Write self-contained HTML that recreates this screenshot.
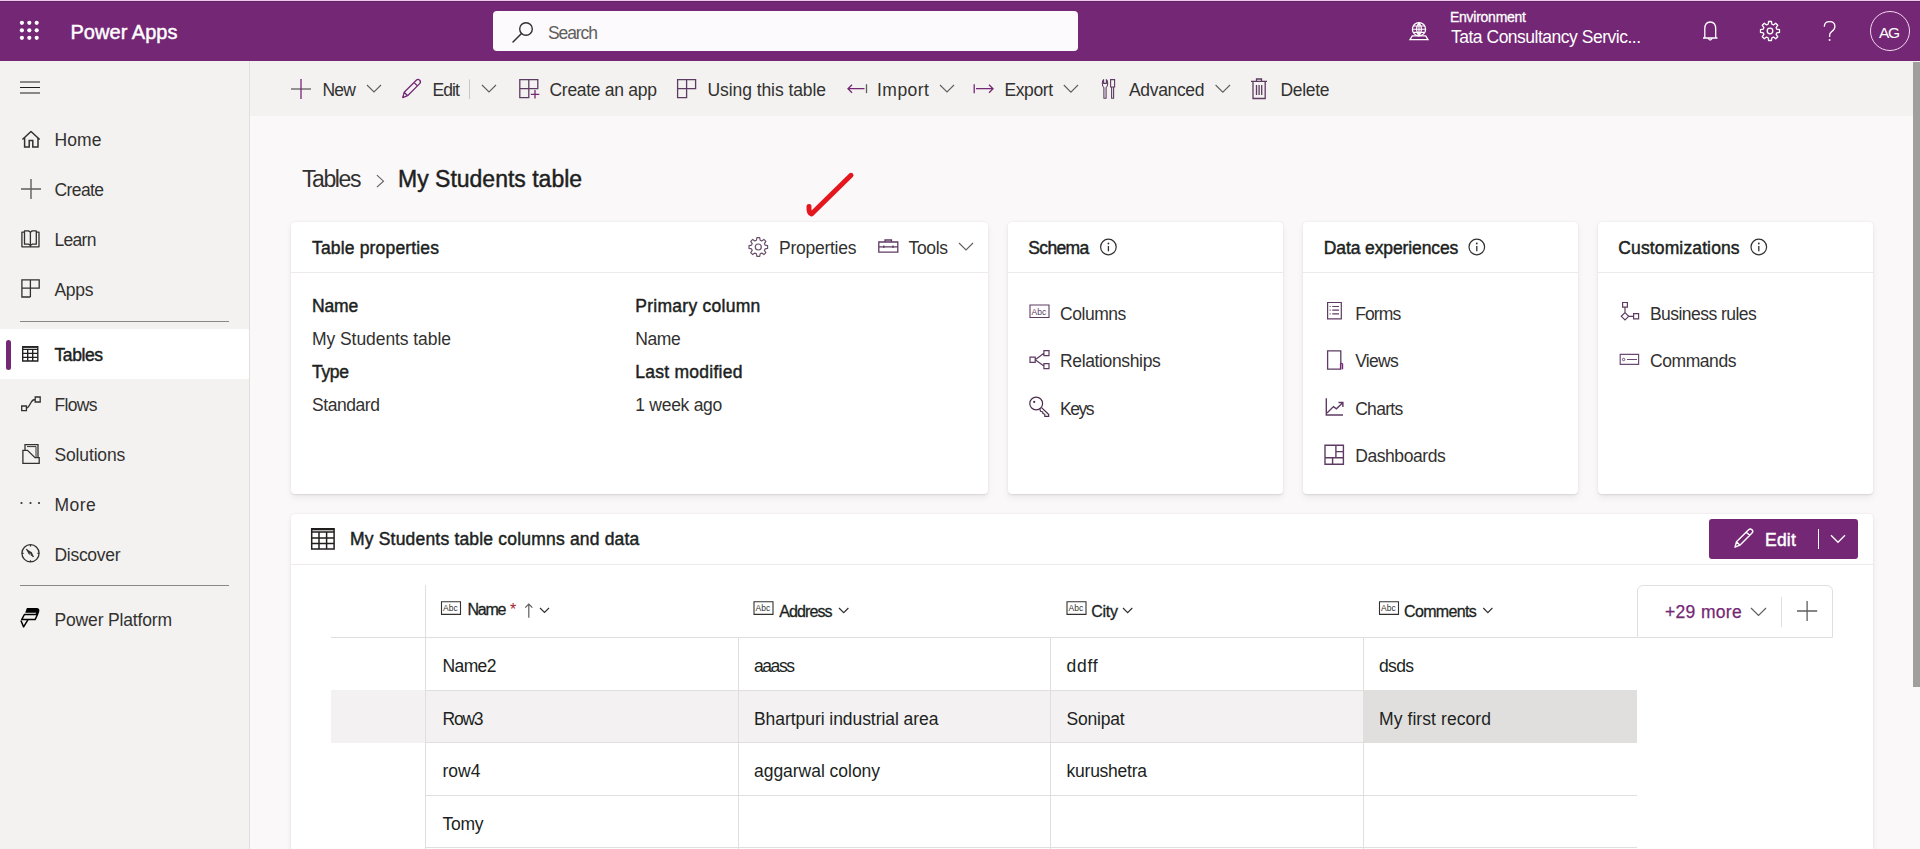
<!DOCTYPE html>
<html><head><meta charset="utf-8"><title>Power Apps</title>
<style>
html,body{margin:0;padding:0;}
body{width:1920px;height:849px;overflow:hidden;position:relative;background:#fbf8f9;font-family:"Liberation Sans",sans-serif;}
.t{position:absolute;white-space:nowrap;line-height:1;}
.b{position:absolute;box-sizing:border-box;}
svg.b{overflow:visible;}
</style></head><body>
<div class="b" style="left:0px;top:0px;width:1920px;height:61px;background:#742774;"></div>
<div class="b" style="left:0px;top:0px;width:1920px;height:1px;background:#f0c8ee;"></div>
<div class="b" style="left:0px;top:1px;width:1920px;height:1px;background:#5e2460;"></div>
<div class="b" style="left:0px;top:61px;width:249px;height:788px;background:#f3f2f1;"></div>
<div class="b" style="left:249px;top:61px;width:1px;height:788px;background:#e1dfdd;"></div>
<div class="b" style="left:250px;top:61px;width:1670px;height:55px;background:#f3f2f1;"></div>
<div class="b" style="left:1913px;top:62px;width:7px;height:625px;background:#a19f9d;border-radius:0;"></div>
<div class="t" style="left:70.50px;top:22px;font-size:20px;color:#ffffff;-webkit-text-stroke:0.45px #ffffff;letter-spacing:0.033px;">Power Apps</div>
<div class="b" style="left:493px;top:11px;width:585px;height:40px;background:#fcfafc;border-radius:4px;"></div>
<div class="t" style="left:548.00px;top:25px;font-size:17.5px;color:#605e5c;letter-spacing:-1.095px;">Search</div>
<div class="t" style="left:1450.00px;top:10px;font-size:14px;color:#ffffff;-webkit-text-stroke:0.45px #ffffff;letter-spacing:-0.261px;-webkit-text-stroke-width:0.3px;">Environment</div>
<div class="t" style="left:1451.00px;top:29px;font-size:17.5px;color:#ffffff;letter-spacing:-0.492px;">Tata Consultancy Servic...</div>
<div class="b" style="left:1870px;top:11px;width:40px;height:40px;border:1.3px solid #f3d6f0;border-radius:50%;"></div>
<div class="t" style="left:1879.00px;top:25px;font-size:15.5px;color:#ffffff;letter-spacing:-1.398px;">AG</div>
<div class="b" style="left:20px;top:321px;width:209px;height:1px;background:#8a8886;"></div>
<div class="b" style="left:20px;top:585px;width:209px;height:1px;background:#8a8886;"></div>
<div class="b" style="left:0px;top:329px;width:249px;height:50px;background:#ffffff;"></div>
<div class="b" style="left:6px;top:340px;width:5px;height:30px;background:#742774;border-radius:3px;"></div>
<div class="t" style="left:54.50px;top:132px;font-size:17.5px;color:#323130;letter-spacing:0.092px;">Home</div>
<div class="t" style="left:54.50px;top:182px;font-size:17.5px;color:#323130;letter-spacing:-0.600px;">Create</div>
<div class="t" style="left:54.50px;top:232px;font-size:17.5px;color:#323130;letter-spacing:-0.700px;">Learn</div>
<div class="t" style="left:54.50px;top:282px;font-size:17.5px;color:#323130;letter-spacing:-0.300px;">Apps</div>
<div class="t" style="left:54.50px;top:347px;font-size:17.5px;color:#201f1e;-webkit-text-stroke:0.45px #201f1e;letter-spacing:-0.415px;">Tables</div>
<div class="t" style="left:54.50px;top:397px;font-size:17.5px;color:#323130;letter-spacing:-0.669px;">Flows</div>
<div class="t" style="left:54.50px;top:447px;font-size:17.5px;color:#323130;letter-spacing:-0.152px;">Solutions</div>
<div class="t" style="left:54.50px;top:497px;font-size:17.5px;color:#323130;letter-spacing:0.433px;">More</div>
<div class="t" style="left:54.50px;top:547px;font-size:17.5px;color:#323130;letter-spacing:-0.296px;">Discover</div>
<div class="t" style="left:54.50px;top:612px;font-size:17.5px;color:#323130;letter-spacing:-0.162px;">Power Platform</div>
<div class="t" style="left:322.50px;top:82px;font-size:17.5px;color:#323130;letter-spacing:-0.794px;">New</div>
<div class="t" style="left:432.50px;top:82px;font-size:17.5px;color:#323130;letter-spacing:-0.896px;">Edit</div>
<div class="t" style="left:549.50px;top:82px;font-size:17.5px;color:#323130;letter-spacing:-0.288px;">Create an app</div>
<div class="t" style="left:707.50px;top:82px;font-size:17.5px;color:#323130;letter-spacing:-0.074px;">Using this table</div>
<div class="t" style="left:877.00px;top:82px;font-size:17.5px;color:#323130;letter-spacing:0.478px;">Import</div>
<div class="t" style="left:1004.50px;top:82px;font-size:17.5px;color:#323130;letter-spacing:-0.415px;">Export</div>
<div class="t" style="left:1129.00px;top:82px;font-size:17.5px;color:#323130;letter-spacing:-0.339px;">Advanced</div>
<div class="t" style="left:1280.50px;top:82px;font-size:17.5px;color:#323130;letter-spacing:-0.315px;">Delete</div>
<div class="t" style="left:302.00px;top:168px;font-size:23px;color:#323130;letter-spacing:-1.414px;">Tables</div>
<div class="t" style="left:398.00px;top:168px;font-size:23px;color:#201f1e;-webkit-text-stroke:0.45px #201f1e;">My Students table</div>
<div class="b" style="left:291px;top:222px;width:697px;height:272px;background:#ffffff;border-radius:4px;box-shadow:0 0.6px 1.8px rgba(0,0,0,0.10),0 3.2px 7.2px rgba(0,0,0,0.06);"></div>
<div class="b" style="left:291px;top:272px;width:697px;height:1px;background:#edebe9;"></div>
<div class="b" style="left:1008px;top:222px;width:275px;height:272px;background:#ffffff;border-radius:4px;box-shadow:0 0.6px 1.8px rgba(0,0,0,0.10),0 3.2px 7.2px rgba(0,0,0,0.06);"></div>
<div class="b" style="left:1008px;top:272px;width:275px;height:1px;background:#edebe9;"></div>
<div class="b" style="left:1303px;top:222px;width:275px;height:272px;background:#ffffff;border-radius:4px;box-shadow:0 0.6px 1.8px rgba(0,0,0,0.10),0 3.2px 7.2px rgba(0,0,0,0.06);"></div>
<div class="b" style="left:1303px;top:272px;width:275px;height:1px;background:#edebe9;"></div>
<div class="b" style="left:1598px;top:222px;width:275px;height:272px;background:#ffffff;border-radius:4px;box-shadow:0 0.6px 1.8px rgba(0,0,0,0.10),0 3.2px 7.2px rgba(0,0,0,0.06);"></div>
<div class="b" style="left:1598px;top:272px;width:275px;height:1px;background:#edebe9;"></div>
<div class="b" style="left:291px;top:514px;width:1582px;height:400px;background:#ffffff;border-radius:4px;box-shadow:0 0.6px 1.8px rgba(0,0,0,0.10),0 3.2px 7.2px rgba(0,0,0,0.06);"></div>
<div class="b" style="left:291px;top:564px;width:1582px;height:1px;background:#edebe9;"></div>
<div class="t" style="left:312.00px;top:240px;font-size:17.5px;color:#201f1e;-webkit-text-stroke:0.45px #201f1e;letter-spacing:0.166px;">Table properties</div>
<div class="t" style="left:779.00px;top:240px;font-size:17.5px;color:#323130;letter-spacing:-0.256px;">Properties</div>
<div class="t" style="left:908.50px;top:240px;font-size:17.5px;color:#323130;letter-spacing:-0.341px;">Tools</div>
<div class="t" style="left:312.00px;top:298px;font-size:17.5px;color:#201f1e;-webkit-text-stroke:0.45px #201f1e;letter-spacing:-0.142px;">Name</div>
<div class="t" style="left:312.00px;top:331px;font-size:17.5px;color:#323130;letter-spacing:-0.068px;">My Students table</div>
<div class="t" style="left:312.00px;top:364px;font-size:17.5px;color:#201f1e;-webkit-text-stroke:0.45px #201f1e;letter-spacing:-0.325px;">Type</div>
<div class="t" style="left:312.00px;top:397px;font-size:17.5px;color:#323130;letter-spacing:-0.436px;">Standard</div>
<div class="t" style="left:635.30px;top:298px;font-size:17.5px;color:#201f1e;-webkit-text-stroke:0.45px #201f1e;letter-spacing:0.266px;">Primary column</div>
<div class="t" style="left:635.30px;top:331px;font-size:17.5px;color:#323130;letter-spacing:-0.442px;">Name</div>
<div class="t" style="left:635.30px;top:364px;font-size:17.5px;color:#201f1e;-webkit-text-stroke:0.45px #201f1e;letter-spacing:0.256px;">Last modified</div>
<div class="t" style="left:635.30px;top:397px;font-size:17.5px;color:#323130;letter-spacing:-0.279px;">1 week ago</div>
<div class="t" style="left:1028.30px;top:240px;font-size:17.5px;color:#201f1e;-webkit-text-stroke:0.45px #201f1e;letter-spacing:-0.645px;">Schema</div>
<div class="t" style="left:1060.00px;top:306px;font-size:17.5px;color:#323130;letter-spacing:-0.456px;">Columns</div>
<div class="t" style="left:1060.00px;top:353px;font-size:17.5px;color:#323130;letter-spacing:-0.357px;">Relationships</div>
<div class="t" style="left:1060.00px;top:401px;font-size:17.5px;color:#323130;letter-spacing:-1.479px;">Keys</div>
<div class="t" style="left:1323.80px;top:240px;font-size:17.5px;color:#201f1e;-webkit-text-stroke:0.45px #201f1e;letter-spacing:-0.110px;">Data experiences</div>
<div class="t" style="left:1355.20px;top:306px;font-size:17.5px;color:#323130;letter-spacing:-0.903px;">Forms</div>
<div class="t" style="left:1355.20px;top:353px;font-size:17.5px;color:#323130;letter-spacing:-0.719px;">Views</div>
<div class="t" style="left:1355.20px;top:401px;font-size:17.5px;color:#323130;letter-spacing:-0.708px;">Charts</div>
<div class="t" style="left:1355.20px;top:448px;font-size:17.5px;color:#323130;letter-spacing:-0.425px;">Dashboards</div>
<div class="t" style="left:1618.30px;top:240px;font-size:17.5px;color:#201f1e;-webkit-text-stroke:0.45px #201f1e;letter-spacing:0.130px;">Customizations</div>
<div class="t" style="left:1650.00px;top:306px;font-size:17.5px;color:#323130;letter-spacing:-0.549px;">Business rules</div>
<div class="t" style="left:1650.00px;top:353px;font-size:17.5px;color:#323130;letter-spacing:-0.430px;">Commands</div>
<div class="t" style="left:350.00px;top:531px;font-size:17.5px;color:#201f1e;-webkit-text-stroke:0.45px #201f1e;letter-spacing:0.189px;">My Students table columns and data</div>
<div class="b" style="left:1709px;top:519px;width:149px;height:40px;background:#742774;border-radius:3px;"></div>
<div class="t" style="left:1765.00px;top:532px;font-size:17.5px;color:#ffffff;-webkit-text-stroke:0.45px #ffffff;letter-spacing:0.204px;">Edit</div>
<div class="b" style="left:1818px;top:529px;width:1px;height:20px;background:#ffffff;"></div>
<div class="b" style="left:331px;top:690px;width:1306px;height:53px;background:#f3f1f1;"></div>
<div class="b" style="left:425px;top:585px;width:1px;height:264px;background:#e1dfdd;"></div>
<div class="b" style="left:331px;top:637px;width:1306px;height:1px;background:#e1dfdd;"></div>
<div class="b" style="left:426px;top:690px;width:1211px;height:1px;background:#e1dfdd;"></div>
<div class="b" style="left:426px;top:742px;width:1211px;height:1px;background:#e1dfdd;"></div>
<div class="b" style="left:426px;top:795px;width:1211px;height:1px;background:#e1dfdd;"></div>
<div class="b" style="left:426px;top:847px;width:1211px;height:1px;background:#e1dfdd;"></div>
<div class="b" style="left:738px;top:637px;width:1px;height:212px;background:#e1dfdd;"></div>
<div class="b" style="left:1050px;top:637px;width:1px;height:212px;background:#e1dfdd;"></div>
<div class="b" style="left:1363px;top:637px;width:1px;height:212px;background:#e1dfdd;"></div>
<div class="b" style="left:1363px;top:690px;width:274px;height:53px;background:#e1dfdd;"></div>
<div class="t" style="left:467.50px;top:602px;font-size:16px;color:#201f1e;-webkit-text-stroke:0.45px #201f1e;letter-spacing:-1.273px;-webkit-text-stroke-width:0.3px;">Name</div>
<div class="t" style="left:510.00px;top:602px;font-size:16px;color:#a4262c;">*</div>
<div class="t" style="left:779.20px;top:604px;font-size:16px;color:#201f1e;-webkit-text-stroke:0.45px #201f1e;letter-spacing:-0.887px;-webkit-text-stroke-width:0.3px;">Address</div>
<div class="t" style="left:1091.20px;top:604px;font-size:16px;color:#201f1e;-webkit-text-stroke:0.45px #201f1e;letter-spacing:-0.240px;-webkit-text-stroke-width:0.3px;">City</div>
<div class="t" style="left:1404.00px;top:604px;font-size:16px;color:#201f1e;-webkit-text-stroke:0.45px #201f1e;letter-spacing:-0.651px;-webkit-text-stroke-width:0.3px;">Comments</div>
<div class="t" style="left:442.50px;top:658px;font-size:17.5px;color:#201f1e;letter-spacing:-0.609px;">Name2</div>
<div class="t" style="left:754.00px;top:658px;font-size:17.5px;color:#201f1e;letter-spacing:-1.431px;">aaass</div>
<div class="t" style="left:1066.60px;top:658px;font-size:17.5px;color:#201f1e;letter-spacing:0.708px;">ddff</div>
<div class="t" style="left:1379.00px;top:658px;font-size:17.5px;color:#201f1e;letter-spacing:-0.642px;">dsds</div>
<div class="t" style="left:442.50px;top:711px;font-size:17.5px;color:#201f1e;letter-spacing:-1.237px;">Row3</div>
<div class="t" style="left:754.00px;top:711px;font-size:17.5px;color:#201f1e;letter-spacing:-0.056px;">Bhartpuri industrial area</div>
<div class="t" style="left:1066.60px;top:711px;font-size:17.5px;color:#201f1e;letter-spacing:-0.221px;">Sonipat</div>
<div class="t" style="left:1379.00px;top:711px;font-size:17.5px;color:#201f1e;letter-spacing:0.081px;">My first record</div>
<div class="t" style="left:442.50px;top:763px;font-size:17.5px;color:#201f1e;">row4</div>
<div class="t" style="left:754.00px;top:763px;font-size:17.5px;color:#201f1e;letter-spacing:-0.031px;">aggarwal colony</div>
<div class="t" style="left:1066.60px;top:763px;font-size:17.5px;color:#201f1e;letter-spacing:-0.253px;">kurushetra</div>
<div class="t" style="left:442.50px;top:816px;font-size:17.5px;color:#201f1e;letter-spacing:-0.275px;">Tomy</div>
<div class="b" style="left:1637px;top:585px;width:196px;height:53px;border:1px solid #e1dfdd;border-radius:6px 6px 0 0;background:#fff;"></div>
<div class="t" style="left:1665.00px;top:604px;font-size:17.5px;color:#742774;letter-spacing:0.334px;-webkit-text-stroke:0.25px #742774;">+29 more</div>
<div class="b" style="left:1781px;top:597px;width:1px;height:30px;background:#e1dfdd;"></div>
<svg class="b" style="left:0;top:0" width="1920" height="849" viewBox="0 0 1920 849"><circle cx="21.9" cy="22.8" r="2.1" fill="#fff"/><circle cx="21.9" cy="30.3" r="2.1" fill="#fff"/><circle cx="21.9" cy="37.8" r="2.1" fill="#fff"/><circle cx="29.3" cy="22.8" r="2.1" fill="#fff"/><circle cx="29.3" cy="30.3" r="2.1" fill="#fff"/><circle cx="29.3" cy="37.8" r="2.1" fill="#fff"/><circle cx="36.7" cy="22.8" r="2.1" fill="#fff"/><circle cx="36.7" cy="30.3" r="2.1" fill="#fff"/><circle cx="36.7" cy="37.8" r="2.1" fill="#fff"/><circle cx="526" cy="29" r="6.3" stroke="#323130" stroke-width="1.4" fill="none"/><path d="M521.5 33.5 L513 42" stroke="#323130" stroke-width="1.5" fill="none" stroke-linecap="round"/><circle cx="1419" cy="29.2" r="6.6" stroke="#fff" stroke-width="1.3" fill="none"/><path d="M1412.4 29.2 H1425.6 M1413.5 26 H1424.5 M1413.5 32.4 H1424.5 M1419 22.6 V35.8 M1419 22.6 Q1414 29.2 1419 35.8 M1419 22.6 Q1424 29.2 1419 35.8" stroke="#ffffff" stroke-width="1.1" fill="none" /><path d="M1410 39.6 L1412.3 35.8 H1425.7 L1428 39.6 Z" stroke="#ffffff" stroke-width="1.3" fill="none" /><path d="M1703 38 H1717.5 M1704.8 38 V29 Q1704.8 22 1710.2 22 Q1715.7 22 1715.7 29 V38 M1708.2 38.5 Q1710.2 41.5 1712.2 38.5" stroke="#ffffff" stroke-width="1.3" fill="none" /><path d="M1776.75 29.13 L1779.49 29.55 L1779.49 32.45 L1776.75 32.87 L1776.09 34.45 L1777.73 36.69 L1775.69 38.73 L1773.45 37.09 L1771.87 37.75 L1771.45 40.49 L1768.55 40.49 L1768.13 37.75 L1766.55 37.09 L1764.31 38.73 L1762.27 36.69 L1763.91 34.45 L1763.25 32.87 L1760.51 32.45 L1760.51 29.55 L1763.25 29.13 L1763.91 27.55 L1762.27 25.31 L1764.31 23.27 L1766.55 24.91 L1768.13 24.25 L1768.55 21.51 L1771.45 21.51 L1771.87 24.25 L1773.45 24.91 L1775.69 23.27 L1777.73 25.31 L1776.09 27.55 Z" stroke="#ffffff" stroke-width="1.3" fill="none" stroke-linejoin="round"/><circle cx="1770" cy="31" r="2.8" stroke="#ffffff" stroke-width="1.3" fill="none"/><path d="M1824.3 26.8 Q1824.3 21.7 1829.6 21.7 Q1834.9 21.7 1834.9 26.6 Q1834.9 29.6 1831.6 31.6 Q1829.6 33 1829.6 35.4 V37" stroke="#ffffff" stroke-width="1.3" fill="none" /><circle cx="1829.6" cy="40" r="0.95" fill="#fff"/><path d="M20 82 H40 M20 87.5 H40 M20 93 H40" stroke="#201f1e" stroke-width="1.1" fill="none" /><path d="M22.4 139.5 L31 131.5 L39.7 139.5" stroke="#323130" stroke-width="1.5" fill="none" stroke-linejoin="round"/><path d="M24.6 138 V147 H29.2 V140.5 H32.8 V147 H38 V138" stroke="#323130" stroke-width="1.5" fill="none" /><path d="M21 189 H41 M31 179 V199" stroke="#605e5c" stroke-width="1.4" fill="none" /><path d="M24.3 232.2 H21.9 V246.8 H39 V232.2 H36.5 M24.5 244.2 V230.9 H28.6 L30.4 232.2 L32.2 230.9 H36.3 V244.2 H32.2 L30.4 245.4 L28.6 244.2 Z M30.4 232.2 V246.8" stroke="#323130" stroke-width="1.3" fill="none" stroke-linejoin="round"/><path d="M21.9 279.8 H39.2 V288.2 H21.9 Z M30.4 279.8 V297 M21.9 288.2 V297 H30.4" stroke="#323130" stroke-width="1.3" fill="none" /><path d="M22.7 346.7 H37.8 V361 H22.7 Z M22.7 349.4 H37.8 M22.7 353.4 H37.8 M22.7 357.4 H37.8 M27.7 349.4 V361 M32.7 349.4 V361" stroke="#201f1e" stroke-width="1.35" fill="none" /><path d="M22.5 347.3 H38" stroke="#323130" stroke-width="1.3" fill="none" /><path d="M21.7 406 H26.4 V410.6 H21.7 Z M35.2 397 H40.2 V402 H35.2 Z M26.4 408.3 Q28.5 407.5 31 402.5 Q32.5 399.5 35.2 399.5" stroke="#323130" stroke-width="1.3" fill="none" /><path d="M22.9 450.3 H27.5 L35 457.7 H39.2 V463.3 H22.9 Z M25 450.3 V444.6 H38 V457.7" stroke="#323130" stroke-width="1.3" fill="none" /><path d="M27 446.6 H36 V457.7" stroke="#323130" stroke-width="1.0" fill="none" /><circle cx="21.5" cy="503" r="1.1" fill="#323130"/><circle cx="30.5" cy="503" r="1.1" fill="#323130"/><circle cx="39" cy="503" r="1.1" fill="#323130"/><circle cx="30.5" cy="553.3" r="8.6" stroke="#323130" stroke-width="1.3" fill="none"/><path d="M26.3 549.2 L33.5 556.8" stroke="#323130" stroke-width="1.2" fill="none" /><path d="M26.2 549.1 L31.8 552.2 L33.9 557 L28.6 554 Z" fill="#323130" /><path d="M29.2 552.4 L31.2 554.6 L30.6 555 Z" fill="#f3f2f1" /><path d="M30.5 544.7 V546.5 M30.5 560.2 V562 M21.9 553.3 H23.6 M37.4 553.3 H39.1" stroke="#323130" stroke-width="1.2" fill="none" /><path d="M25.2 612.7 L26.9 608.1 H36.8 Q39.8 608.3 39.3 611.3 Q38.9 613.3 37.7 615.2 L35.4 614.5 L36.2 612.7 Z" fill="#000" /><path d="M24.4 614.5 H37.5 L35.1 619.6 H21.7 Z" stroke="#000" stroke-width="1.5" fill="none" stroke-linejoin="round"/><path d="M20.9 620.5 L23.6 626.9 L27.9 619.9" stroke="#000" stroke-width="1.5" fill="none" stroke-linejoin="round"/><path d="M291 89 H311" stroke="#605e5c" stroke-width="1.3" fill="none" /><path d="M301 79 V99" stroke="#742774" stroke-width="1.3" fill="none" /><path d="M367 85 L374.0 92.0 L381 85" stroke="#605e5c" stroke-width="1.1" fill="none" /><path d="M402.7 97.6 L404.2 92.3 L416.3 80.2 Q418 78.6 419.7 80.3 Q421.3 82 419.7 83.6 L407.6 95.7 Z M414 82.5 L417.4 85.9 M404.2 92.3 L407.6 95.7" stroke="#742774" stroke-width="1.3" fill="none" stroke-linejoin="round"/><path d="M469.5 79.5 V99" stroke="#c8c6c4" stroke-width="1" fill="none" /><path d="M482 85 L489.0 92.0 L496 85" stroke="#605e5c" stroke-width="1.1" fill="none" /><path d="M519.8 79.6 H537.8 V88.6 H519.8 Z M528.8 79.6 V97.6 H519.8 V88.6" stroke="#5e3b62" stroke-width="1.3" fill="none" /><path d="M535 90 V98.5 M530.8 94.3 H539.3" stroke="#742774" stroke-width="1.3" fill="none" /><path d="M677.6 79.6 H695.6 V88.6 H677.6 Z M686.6 79.6 V97.6 H677.6 V88.6" stroke="#5e3b62" stroke-width="1.3" fill="none" /><path d="M866.5 84.2 V93.2" stroke="#605e5c" stroke-width="1.3" fill="none" /><path d="M848 88.7 H864.5 M852 84.7 L848 88.7 L852 92.7" stroke="#742774" stroke-width="1.3" fill="none" /><path d="M940 85 L947.0 92.0 L954 85" stroke="#605e5c" stroke-width="1.1" fill="none" /><path d="M974.2 84.2 V93.2" stroke="#742774" stroke-width="1.3" fill="none" /><path d="M976 88.7 H993 M989 84.7 L993 88.7 L989 92.7" stroke="#742774" stroke-width="1.3" fill="none" /><path d="M1063.8 85 L1070.9 92.10000000000002 L1078 85" stroke="#605e5c" stroke-width="1.1" fill="none" /><path d="M1103.9 98.3 V87.6 Q1102.3 86.6 1102.3 83.2 Q1102.3 80.6 1103.6 79.6 V83.4 H1106.4 V79.6 Q1107.7 80.6 1107.7 83.2 Q1107.7 86.6 1106.1 87.6 V98.3 Z" stroke="#5e3b62" stroke-width="1.1" fill="none" stroke-linejoin="round"/><path d="M1110.6 79.6 H1114.6 V87 H1110.6 Z M1111.6 87 V98.3 H1113.6 V87 M1110.2 87 H1115" stroke="#5e3b62" stroke-width="1.1" fill="none" /><path d="M1215.6 85 L1222.8 92.20000000000005 L1230 85" stroke="#605e5c" stroke-width="1.1" fill="none" /><path d="M1251 81.3 H1267 M1256.5 81.3 V79 H1261.5 V81.3 M1253 81.3 V98.5 H1265.2 V81.3 M1256.5 85 V95 M1259.1 85 V95 M1261.7 85 V95" stroke="#5e3b62" stroke-width="1.3" fill="none" /><path d="M376.9 175.2 L383.5 181.2 L376.9 187.2" stroke="#605e5c" stroke-width="1.1" fill="none" /><path d="M809 206.5 Q808.5 213.5 811.5 214 L851 175.3" stroke="#e4161e" stroke-width="5" fill="none" stroke-linecap="round" stroke-linejoin="round"/><path d="M765.05 245.13 L767.59 245.58 L767.59 248.42 L765.05 248.87 L764.39 250.45 L765.87 252.57 L763.87 254.57 L761.75 253.09 L760.17 253.75 L759.72 256.29 L756.88 256.29 L756.43 253.75 L754.85 253.09 L752.73 254.57 L750.73 252.57 L752.21 250.45 L751.55 248.87 L749.01 248.42 L749.01 245.58 L751.55 245.13 L752.21 243.55 L750.73 241.43 L752.73 239.43 L754.85 240.91 L756.43 240.25 L756.88 237.71 L759.72 237.71 L760.17 240.25 L761.75 240.91 L763.87 239.43 L765.87 241.43 L764.39 243.55 Z" stroke="#6a4f6a" stroke-width="1.2" fill="none" stroke-linejoin="round"/><circle cx="758.3" cy="247" r="3.0" stroke="#6a4f6a" stroke-width="1.2" fill="none"/><path d="M878.8 242 H897.8 V252.2 H878.8 Z M885 242 V240 H891.5 V242 M878.8 246.8 H897.8 M883.8 245.5 V248 M893 245.5 V248" stroke="#5e3b62" stroke-width="1.3" fill="none" /><path d="M959 243 L966.0 250.0 L973 243" stroke="#605e5c" stroke-width="1.1" fill="none" /><circle cx="1108.4" cy="247" r="7.8" stroke="#323130" stroke-width="1.2" fill="none"/><path d="M1108.4 246 V251.3" stroke="#323130" stroke-width="1.3" fill="none" /><circle cx="1108.4" cy="243.5" r="0.9" fill="#323130"/><circle cx="1476.8" cy="247" r="7.8" stroke="#323130" stroke-width="1.2" fill="none"/><path d="M1476.8 246 V251.3" stroke="#323130" stroke-width="1.3" fill="none" /><circle cx="1476.8" cy="243.5" r="0.9" fill="#323130"/><circle cx="1758.8" cy="247" r="7.8" stroke="#323130" stroke-width="1.2" fill="none"/><path d="M1758.8 246 V251.3" stroke="#323130" stroke-width="1.3" fill="none" /><circle cx="1758.8" cy="243.5" r="0.9" fill="#323130"/><path d="M1030 305 H1049 V317.5 H1030 Z" stroke="#5e3b62" stroke-width="1.1" fill="none" /><text x="1031.6" y="314.5" font-family="Liberation Sans" font-size="8.5" fill="#5e3b62">Abc</text><path d="M1030 357.2 H1035.2 V362.4 H1030 Z M1043.9 350.6 H1049 V355.6 H1043.9 Z M1043.9 363.6 H1049 V368.6 H1043.9 Z M1035.2 359.8 L1043.9 353.2 M1035.2 359.8 L1043.9 366.1" stroke="#5e3b62" stroke-width="1.2" fill="none" /><circle cx="1036.2" cy="403.5" r="6.4" stroke="#4a2d4d" stroke-width="1.2" fill="none"/><path d="M1041.6 407.6 L1048.7 414.5 V416.4 H1044.8 V414.3 L1042.8 413.5 V412 L1040.5 411.2 L1039.9 409.3" stroke="#4a2d4d" stroke-width="1.2" fill="none" stroke-linejoin="round"/><circle cx="1034.2" cy="401.9" r="1.1" fill="#4a2d4d"/><path d="M1327.6 302.5 H1341.3 V318.8 H1327.6 Z M1332.3 306.5 H1339 M1332.3 310.2 H1339 M1332.3 313.9 H1339" stroke="#5e3b62" stroke-width="1.2" fill="none" /><path d="M1329.6 306.5 H1330.6 M1329.6 310.2 H1330.6 M1329.6 313.9 H1330.6" stroke="#5e3b62" stroke-width="1.2" fill="none" /><path d="M1327.6 350.8 H1340.8 V369.2 H1327.6 Z" stroke="#5e3b62" stroke-width="1.3" fill="none" /><path d="M1340.5 369.2 V364.2 Q1341.8 362.5 1342.6 364.2 V369.2" stroke="#742774" stroke-width="1.2" fill="none" /><path d="M1326.3 398.3 V415 H1343 M1327 413 L1333.5 406.6 L1336.4 408.8 L1342.8 402.7 M1338.5 402.5 H1342.9 V406.9" stroke="#5e3b62" stroke-width="1.4" fill="none" /><path d="M1325 445.2 H1343.4 V464.2 H1325 Z M1335.9 445.2 V457.8 M1325 457.8 H1343.4 M1335.9 451.6 H1343.4 M1332.6 457.8 V464.2" stroke="#5e3b62" stroke-width="1.4" fill="none" /><path d="M1622.6 302.5 H1627.4 V307.2 H1622.6 Z M1625 307.2 V312.6 M1625 312.6 L1628.7 316.3 L1625 320 L1621.3 316.3 Z M1628.7 316.3 H1633.6 M1633.6 313.6 H1638.6 V318.9 H1633.6 Z" stroke="#5e3b62" stroke-width="1.2" fill="none" /><path d="M1620.2 354.4 H1638.6 V364.4 H1620.2 Z M1627 359.5 H1637" stroke=" #6b4a73" stroke-width="1.2" fill="none" /><circle cx="1623.6" cy="359.5" r="1.2" stroke="#6b4a73" stroke-width="1" fill="none"/><path d="M311.7 528.7 H334.1 V548.9 H311.7 Z M311.7 532 H334.1 M311.7 538 H334.1 M311.7 543.6 H334.1 M319 532 V548.9 M326.6 532 V548.9" stroke="#201f1e" stroke-width="1.5" fill="none" /><path d="M311.7 529.6 H334.1" stroke="#201f1e" stroke-width="1.4" fill="none" /><path d="M1735 547.2 L1736.5 541.8 L1748.6 529.7 Q1750.3 528.1 1752 529.8 Q1753.6 531.5 1752 533.1 L1739.9 545.2 Z M1746.3 532 L1749.7 535.4 M1736.5 541.8 L1739.9 545.2" stroke="#fff" stroke-width="1.4" fill="none" stroke-linejoin="round"/><path d="M1831 535.3 L1838.0 542.3 L1845 535.3" stroke="#fff" stroke-width="1.3" fill="none" /><path d="M441.5 601.8 H460.5 V614.4 H441.5 Z" stroke="#323130" stroke-width="1.1" fill="none" /><text x="443.1" y="611.4" font-family="Liberation Sans" font-size="8.5" fill="#323130">Abc</text><path d="M754 601.8 H773 V614.4 H754 Z" stroke="#323130" stroke-width="1.1" fill="none" /><text x="755.6" y="611.4" font-family="Liberation Sans" font-size="8.5" fill="#323130">Abc</text><path d="M1067 601.8 H1086 V614.4 H1067 Z" stroke="#323130" stroke-width="1.1" fill="none" /><text x="1068.6" y="611.4" font-family="Liberation Sans" font-size="8.5" fill="#323130">Abc</text><path d="M1379.5 601.8 H1398.5 V614.4 H1379.5 Z" stroke="#323130" stroke-width="1.1" fill="none" /><text x="1381.1" y="611.4" font-family="Liberation Sans" font-size="8.5" fill="#323130">Abc</text><path d="M528.8 604 V617.8 M525.2 607.6 L528.8 604 L532.4 607.6" stroke="#605e5c" stroke-width="1.2" fill="none" /><path d="M540 608 L544.5 612.5 L549 608" stroke="#323130" stroke-width="1.2" fill="none" /><path d="M839 608 L843.7 612.7 L848.4 608" stroke="#323130" stroke-width="1.2" fill="none" /><path d="M1123 608 L1127.65 612.65 L1132.3 608" stroke="#323130" stroke-width="1.2" fill="none" /><path d="M1483.3 608 L1487.85 612.5500000000001 L1492.4 608" stroke="#323130" stroke-width="1.2" fill="none" /><path d="M1751 608 L1758.5 615.5 L1766 608" stroke="#605e5c" stroke-width="1.2" fill="none" /><path d="M1797 611 H1817.2 M1807.1 601 V621" stroke="#605e5c" stroke-width="1.3" fill="none" /></svg>
</body></html>
